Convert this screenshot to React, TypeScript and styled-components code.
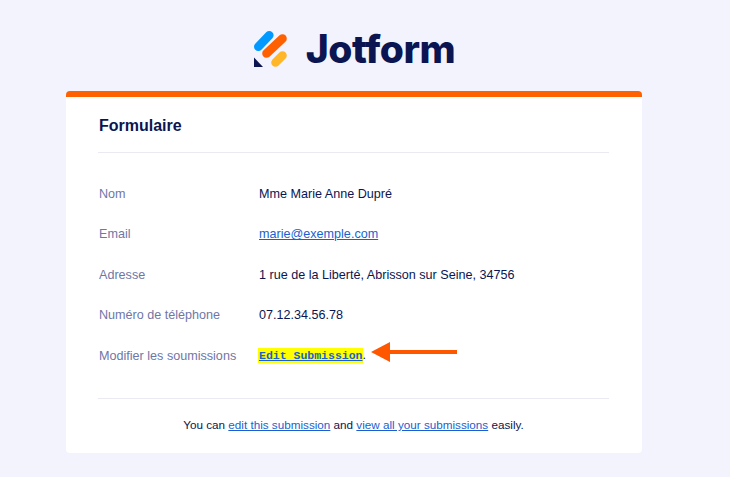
import React from "react";
import styled, { createGlobalStyle } from "styled-components";

const rows = [
  { label: "Nom", value: "Mme Marie Anne Dupré" },
  { label: "Email", value: "marie@exemple.com", href: "#" },
  { label: "Adresse", value: "1 rue de la Liberté, Abrisson sur Seine, 34756" },
  { label: "Numéro de téléphone", value: "07.12.34.56.78" },
];

export default function App() {
  return (
    <Page>
      <GlobalStyle />
      <Header>
        <Logo />
        <Wordmark>Jotform</Wordmark>
      </Header>
      <Card>
        <Title>Formulaire</Title>
        <Rows>
          {rows.map(row => (
            <Row key={row.label}>
              <Label>{row.label}</Label>
              <Value>
                {row.href ? <BlueLink href={row.href}>{row.value}</BlueLink> : row.value}
              </Value>
            </Row>
          ))}
          <Row>
            <Label>Modifier les soumissions</Label>
            <Value>
              <Highlight href="#">Edit Submission</Highlight>.
              <Arrow />
            </Value>
          </Row>
        </Rows>
        <Footer>
          You can <BlueLink href="#">edit this submission</BlueLink> and{" "}
          <BlueLink href="#">view all your submissions</BlueLink> easily.
        </Footer>
      </Card>
    </Page>
  );
}

function Logo() {
  return (
    <svg width="36" height="38" viewBox="0 0 36 38">
      <path d="M1 27.5 L10 37 L1 37 Z" fill="#0a1551" />
      <line x1="5.3" y1="16.7" x2="16.3" y2="5.3" stroke="#0099ff" strokeWidth="8.6" strokeLinecap="round" />
      <line x1="13.5" y1="23.5" x2="29.5" y2="8.5" stroke="#ff6100" strokeWidth="8.6" strokeLinecap="round" />
      <line x1="22.5" y1="32.5" x2="29.5" y2="25.5" stroke="#ffb629" strokeWidth="8.6" strokeLinecap="round" />
    </svg>
  );
}

function Arrow() {
  return (
    <ArrowIcon width="88" height="22" viewBox="0 0 88 22">
      <path d="M1 11 L20 1 L20 9 L87 9 L87 13 L20 13 L20 21 Z" fill="#ff5600" />
    </ArrowIcon>
  );
}

const GlobalStyle = createGlobalStyle`
  html, body {
    margin: 0;
    background: #f3f3fe;
  }
`;

const Page = styled.div`
  width: 730px;
  height: 477px;
  overflow: hidden;
  box-sizing: border-box;
  padding: 29px 88px 0 66px;
  font-family: "Liberation Sans", Arial, sans-serif;
  color: #0a1551;
`;

const Header = styled.div`
  display: flex;
  align-items: center;
  justify-content: center;
  gap: 17px;
  height: 40px;
  margin-bottom: 22px;
`;

const Wordmark = styled.div`
  font-family: Inter, sans-serif;
  font-weight: 800;
  font-size: 39px;
  line-height: 40px;
  letter-spacing: -0.5px;
  color: #0a1551;
`;

const Card = styled.div`
  height: 362px;
  box-sizing: border-box;
  background: #fff;
  border-top: 6px solid #ff6100;
  border-radius: 4px;
  padding: 0 33px 0 32px;
`;

const Title = styled.h1`
  margin: 0;
  height: 38px;
  display: flex;
  align-items: flex-end;
  padding: 0 0 17px 1px;
  box-sizing: content-box;
  border-bottom: 1px solid #eaebf2;
  font-size: 16px;
  font-weight: 700;
  line-height: 19px;
  color: #0a1551;
`;

const Rows = styled.div`
  display: flex;
  flex-direction: column;
  padding: 20.5px 0 22px 1px;
  border-bottom: 1px solid #eaebf2;
`;

const Row = styled.div`
  display: flex;
  align-items: center;
  height: 40.5px;
  font-size: 12.6px;
`;

const Label = styled.div`
  width: 160px;
  flex-shrink: 0;
  color: #6f76a7;
`;

const Value = styled.div`
  position: relative;
  color: #0a1551;
`;

const BlueLink = styled.a`
  color: #1a5fd0;
`;

const Highlight = styled.a`
  font-family: "Liberation Mono", monospace;
  font-size: 11.5px;
  font-weight: 700;
  line-height: 14px;
  color: #1a5fd0;
  background: #ffff00;
  padding: 1px 0 1px 1px;
  margin-left: -1px;
`;

const ArrowIcon = styled.svg`
  position: absolute;
  left: 111px;
  top: -7px;
`;

const Footer = styled.div`
  padding-top: 19px;
  text-align: center;
  font-size: 11.7px;
  line-height: 14px;
  color: #0a1551;
`;
